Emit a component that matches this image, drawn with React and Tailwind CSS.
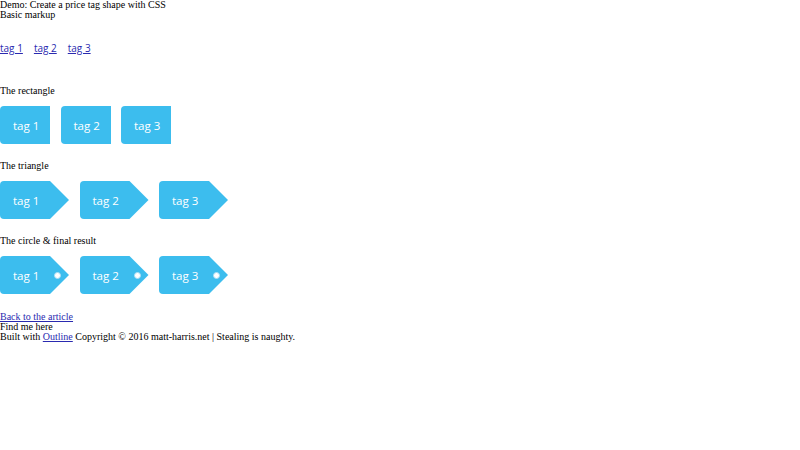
import React from "react";

const tags = ["tag 1", "tag 2", "tag 3"];

function RectTag({ label }) {
  return (
    <a
      href="#"
      className="flex items-center w-[50px] h-[38px] pl-[13px] pt-[1px] bg-[#3cbdee] text-white rounded-l-[4px] text-[11.5px] no-underline"
      style={{ fontFamily: '"Open Sans", sans-serif' }}
    >
      {label}
    </a>
  );
}

function ArrowTag({ label, dot }) {
  return (
    <a
      href="#"
      className="flex items-center w-[69px] h-[38px] pl-[13px] pr-[8px] pt-[1px] bg-[#3cbdee] text-white rounded-l-[4px] text-[11.5px] [clip-path:polygon(0_0,50px_0,69px_50%,50px_100%,0_100%)]"
      style={{ fontFamily: '"Open Sans", sans-serif' }}
    >
      <span>{label}</span>
      {dot && (
        <span className="ml-auto w-[7px] h-[7px] rounded-full bg-white border border-[#a9dcf2]" />
      )}
    </a>
  );
}

export default function App() {
  return (
    <div
      className="bg-white text-black text-[10px] leading-[10px] min-h-[450px]"
      style={{ fontFamily: '"Liberation Serif", "Times New Roman", serif' }}
    >
      <div>Demo: Create a price tag shape with CSS</div>
      <div>Basic markup</div>

      <div
        className="flex gap-[11px] mt-[21px] text-[10px] leading-[14px]"
        style={{ fontFamily: '"Open Sans", sans-serif' }}
      >
        {tags.map((t) => (
          <a key={t} href="#" className="text-[#2a2ab0] underline">
            {t}
          </a>
        ))}
      </div>

      <div className="mt-[31px]">The rectangle</div>
      <div className="flex gap-[10.5px] mt-[10px]">
        {tags.map((t) => (
          <RectTag key={t} label={t} />
        ))}
      </div>

      <div className="mt-[17px]">The triangle</div>
      <div className="flex gap-[10.5px] mt-[10px]">
        {tags.map((t) => (
          <ArrowTag key={t} label={t} />
        ))}
      </div>

      <div className="mt-[17px]">The circle &amp; final result</div>
      <div className="flex gap-[10.5px] mt-[10px]">
        {tags.map((t) => (
          <ArrowTag key={t} label={t} dot />
        ))}
      </div>

      <div className="mt-[18px]">
        <a href="#" className="text-[#2a2ab0] underline">
          Back to the article
        </a>
      </div>
      <div>Find me here</div>
      <div>
        Built with{" "}
        <a href="#" className="text-[#2a2ab0] underline">
          Outline
        </a>{" "}
        Copyright © 2016 matt-harris.net | Stealing is naughty.
      </div>
    </div>
  );
}
